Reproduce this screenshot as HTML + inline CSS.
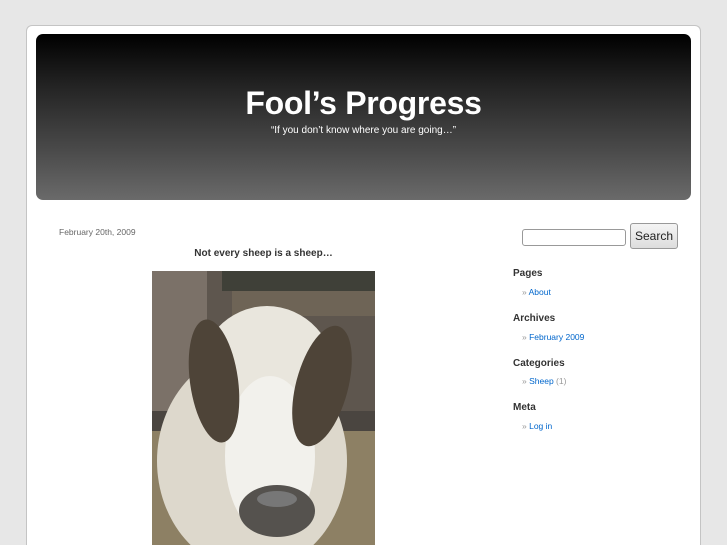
<!DOCTYPE html>
<html style="height:545px;overflow:hidden"><head><style>
body{margin:0;background:#e7e7e7;font-family:"Liberation Sans",sans-serif;width:727px;height:545px;overflow:hidden;position:relative}
#page{position:absolute;left:26px;top:25px;width:673px;height:530px;background:#fff;border:1px solid #c4c4c4;border-bottom:none;border-radius:6px 6px 0 0}
#header{position:absolute;left:36px;top:34px;width:655px;height:166px;border-radius:7px;background:linear-gradient(#000,#222 30%,#4a4a4a 70%,#6a6a6a)}
h1{position:absolute;left:0;width:727px;top:85px;margin:0;text-align:center;color:#fff;font-size:32px;font-weight:bold;letter-spacing:-0.3px}
.desc{position:absolute;left:0;width:727px;top:125px;text-align:center;color:#fff;font-size:10px}
.date{position:absolute;left:59px;top:227px;font-size:8.5px;color:#666}
.title{position:absolute;left:152px;width:223px;top:248px;text-align:center;font-size:10px;font-weight:bold;color:#333}
#side{position:absolute;left:513px;top:0;font-size:8.5px;color:#333}
#side h2{position:absolute;margin:0;font-size:10px;font-weight:bold;color:#333;left:0;white-space:nowrap}
#side .li{position:absolute;left:9px;white-space:nowrap;color:#999}
#side .li a{color:#06c;text-decoration:none}
input{position:absolute;left:522px;top:229px;width:104px;height:17px;border:1px solid #999;border-radius:3px;box-sizing:border-box;padding:0}
button{position:absolute;left:630px;top:223px;width:48px;height:26px;border:1px solid #999;border-radius:3px;background:linear-gradient(#f4f4f4,#ddd);font:12px "Liberation Sans",sans-serif;color:#222;padding:0}
svg{position:absolute;left:152px;top:271px}
</style></head><body>
<div id="page"></div>
<div id="header"></div>
<h1>Fool’s Progress</h1>
<div class="desc">“If you don’t know where you are going…”</div>
<div class="date">February 20th, 2009</div>
<div class="title">Not every sheep is a sheep…</div>
<svg width="223" height="274" viewBox="0 0 223 274">
<rect width="223" height="274" fill="#5e564e"/>
<rect x="0" y="0" width="55" height="140" fill="#7b7168"/>
<rect x="70" y="0" width="153" height="20" fill="#3f4038"/>
<rect x="80" y="20" width="143" height="25" fill="#6e6456"/>
<rect x="0" y="140" width="223" height="20" fill="#4a4540"/>
<rect x="0" y="160" width="223" height="114" fill="#8d8064"/>
<ellipse cx="100" cy="190" rx="95" ry="110" fill="#ddd8cc"/>
<ellipse cx="115" cy="110" rx="70" ry="75" fill="#e9e6dd"/>
<ellipse cx="118" cy="185" rx="45" ry="80" fill="#f2f1ec"/>
<ellipse cx="62" cy="110" rx="24" ry="62" fill="#4e4438" transform="rotate(-8 62 110)"/>
<ellipse cx="170" cy="115" rx="26" ry="62" fill="#4e4438" transform="rotate(15 170 115)"/>
<ellipse cx="125" cy="240" rx="38" ry="26" fill="#55524e"/>
<ellipse cx="125" cy="228" rx="20" ry="8" fill="#777"/>
</svg>
<input type="text">
<button>Search</button>
<div id="side">
<h2 style="top:268px">Pages</h2>
<div class="li" style="top:287px">» <a>About</a></div>
<h2 style="top:313px">Archives</h2>
<div class="li" style="top:332px">» <a>February 2009</a></div>
<h2 style="top:358px">Categories</h2>
<div class="li" style="top:376px">» <a>Sheep</a> (1)</div>
<h2 style="top:402px">Meta</h2>
<div class="li" style="top:421px">» <a>Log in</a></div>
</div>
</body></html>
